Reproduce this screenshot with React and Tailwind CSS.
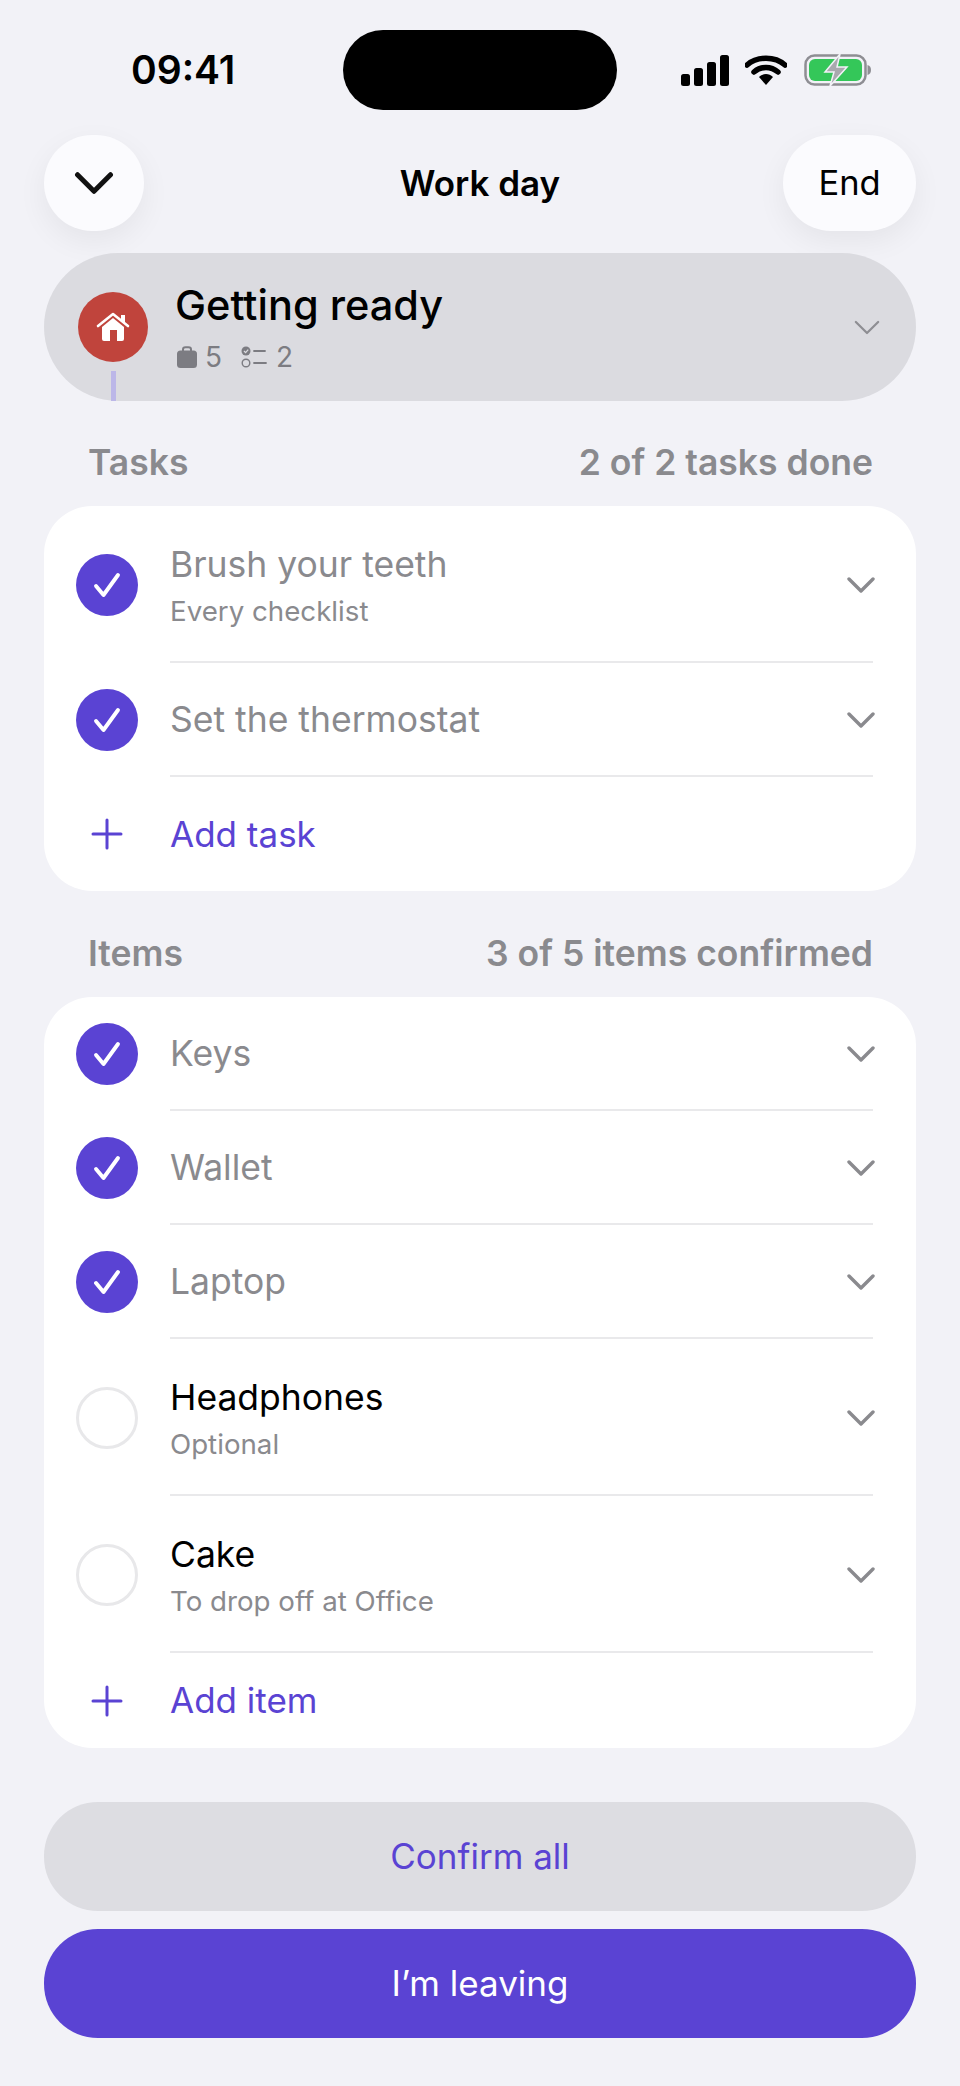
const tasks = [
  { title: 'Brush your teeth', sub: 'Every checklist', done: true },
  { title: 'Set the thermostat', done: true },
]

const items = [
  { title: 'Keys', done: true },
  { title: 'Wallet', done: true },
  { title: 'Laptop', done: true },
  { title: 'Headphones', sub: 'Optional' },
  { title: 'Cake', sub: 'To drop off at Office' },
]

function Chevron({ className, width = 28, height = 16, strokeWidth = 3.4 }) {
  return (
    <svg width={width} height={height} viewBox="0 0 28 16" fill="none" className={className}>
      <path d="M2 2 L14 14 L26 2" stroke="currentColor" strokeWidth={strokeWidth} strokeLinecap="round" strokeLinejoin="round" />
    </svg>
  )
}

function StatusIcons() {
  return (
    <div className="flex items-center gap-[16px] ml-[64px]">
      <svg width="48" height="31" viewBox="0 0 48 31" fill="#000">
        <rect x="0" y="19" width="9" height="12" rx="2.5" />
        <rect x="13" y="13" width="9" height="18" rx="2.5" />
        <rect x="26" y="7" width="9" height="24" rx="2.5" />
        <rect x="39" y="0" width="9" height="31" rx="2.5" />
      </svg>
      <svg width="42" height="31" viewBox="0 0 42 31" fill="none">
        <path d="M2 10 C12 1 30 1 40 10" stroke="#000" strokeWidth="5.5" strokeLinecap="round" />
        <path d="M9 17 C16 11 26 11 33 17" stroke="#000" strokeWidth="5.5" strokeLinecap="round" />
        <path d="M14 22 C18 18 24 18 28 22 L21 30 Z" fill="#000" />
      </svg>
      <svg width="68" height="32" viewBox="0 0 68 32" fill="none" className="ml-[1px]">
        <rect x="1.5" y="1.5" width="60" height="29" rx="9" stroke="#8e8e93" strokeWidth="2.5" />
        <rect x="5" y="5" width="53" height="22" rx="6" fill="#34c759" />
        <path d="M63.5 11 C66 11.5 67 13.5 67 16 C67 18.5 66 20.5 63.5 21 Z" fill="#8e8e93" />
        <path d="M36 0 L21 18 L30 18 L26 32 L43 13 L33 13 Z" fill="#a9a9ae" stroke="#f2f2f7" strokeWidth="1.5" />
      </svg>
    </div>
  )
}

function HouseIcon() {
  return (
    <svg width="34" height="30" viewBox="0 0 34 30" fill="none">
      <path d="M2 14 L17 2 L32 14" stroke="#fff" strokeWidth="2.6" strokeLinecap="round" strokeLinejoin="round" />
      <rect x="25" y="3" width="4" height="7" fill="#fff" />
      <path d="M6 15 L17 6 L28 15 L28 27 Q28 29 26 29 L8 29 Q6 29 6 27 Z" fill="#fff" />
      <rect x="14" y="18" width="7" height="11" fill="#c0443c" />
    </svg>
  )
}

function BagIcon() {
  return (
    <svg width="20" height="22" viewBox="0 0 20 22" fill="none">
      <path d="M6 5 V3.5 Q6 1.2 8.5 1.2 H11.5 Q14 1.2 14 3.5 V5" stroke="#7c7c82" strokeWidth="2" />
      <rect x="0" y="4.5" width="20" height="17.5" rx="3.5" fill="#7c7c82" />
    </svg>
  )
}

function ListIcon() {
  return (
    <svg width="26" height="22" viewBox="0 0 26 22" fill="none">
      <circle cx="5" cy="5" r="4.5" fill="#7c7c82" />
      <path d="M3 5 L4.6 6.6 L7.2 3.6" stroke="#dbdbe0" strokeWidth="1.3" />
      <circle cx="5" cy="17" r="3.8" stroke="#7c7c82" strokeWidth="1.4" />
      <path d="M13 5 H24 M13 17 H25" stroke="#7c7c82" strokeWidth="1.8" strokeLinecap="round" />
    </svg>
  )
}

function Check({ done }) {
  if (!done) {
    return <div className="w-[62px] h-[62px] rounded-full border-[3px] border-[#e8e8ea] bg-white shrink-0" />
  }
  return (
    <div className="w-[62px] h-[62px] rounded-full bg-[#5a43d3] flex items-center justify-center shrink-0">
      <svg width="28" height="26" viewBox="0 0 28 26" fill="none">
        <path d="M3 14 L10.5 23 L25 3" stroke="#fff" strokeWidth="3.9" strokeLinecap="round" strokeLinejoin="round" />
      </svg>
    </div>
  )
}

function Row({ title, sub, done }) {
  return (
    <div className={`flex items-center ${sub ? 'h-[157px]' : 'h-[114px]'}`}>
      <div className="w-[126px] pl-[32px] shrink-0">
        <Check done={done} />
      </div>
      <div className="flex-1 h-full flex items-center justify-between border-b-2 border-[#e9e9eb] mr-[43px]">
        <div className={sub ? 'pt-[5px]' : 'pt-[2px]'}>
          <div className={`text-[35.5px] leading-[44px] ${done ? 'text-[#8a8a8e]' : 'text-black'}`}>{title}</div>
          {sub && <div className="text-[27.7px] leading-[36px] mt-[6px] text-[#8a8a8e]">{sub}</div>}
        </div>
        <Chevron className="text-[#8a8a8e] mt-[2px] -mr-[2px]" />
      </div>
    </div>
  )
}

function AddRow({ label, height }) {
  return (
    <div className={`flex items-center ${height}`}>
      <div className="w-[126px] shrink-0 pl-[47px]">
        <svg width="32" height="32" viewBox="0 0 32 32" fill="none">
          <path d="M16 2 V30 M2 16 H30" stroke="#5a43d3" strokeWidth="3" strokeLinecap="round" />
        </svg>
      </div>
      <span className="text-[35px] text-[#5a43d3]">{label}</span>
    </div>
  )
}

function Section({ label, summary, children }) {
  return (
    <div>
      <div className="flex items-center justify-between h-[44px] pl-[44px] pr-[43px] text-[35.5px] font-semibold text-[#8a8a8e]">
        <span>{label}</span>
        <span>{summary}</span>
      </div>
      <div className="mt-[21px] bg-white rounded-[48px] overflow-hidden">{children}</div>
    </div>
  )
}

export default function App() {
  return (
    <div
      className="w-[960px] h-[2086px] bg-[#f2f2f7] overflow-hidden px-[44px]"
      style={{ fontFamily: 'Inter, sans-serif' }}
    >
      <div className="flex items-center h-[80px] mt-[30px] -mx-[44px] pl-[131px]">
        <span className="w-[212px] text-[39px] font-semibold text-black">09:41</span>
        <div className="w-[274px] h-[80px] rounded-full bg-black" />
        <StatusIcons />
      </div>

      <div className="flex items-center h-[96px] mt-[25px]">
        <div className="flex-1 flex">
          <div className="w-[100px] h-[96px] rounded-full bg-[#fbfbfe] flex items-center justify-center shadow-[0_10px_30px_rgba(0,0,0,0.06)]">
            <Chevron width={40} height={22} strokeWidth={3.6} className="text-[#111]" />
          </div>
        </div>
        <span className="text-[35px] font-semibold text-black">Work day</span>
        <div className="flex-1 flex justify-end">
          <div className="w-[133px] h-[96px] rounded-full bg-[#fbfbfe] flex items-center justify-center text-[34.5px] text-black shadow-[0_10px_30px_rgba(0,0,0,0.06)]">
            End
          </div>
        </div>
      </div>

      <div className="relative flex items-center h-[148px] mt-[22px] rounded-[74px] bg-[#dbdbe0] pl-[34px] pr-[36px]">
        <div className="w-[70px] h-[70px] rounded-full bg-[#c0443c] flex items-center justify-center shrink-0">
          <HouseIcon />
        </div>
        <div className="absolute left-[67px] bottom-0 w-[5px] h-[30px] bg-[#bcb7e8]" />
        <div className="ml-[27px] flex-1">
          <div className="text-[41.5px] leading-[50px] font-medium text-black">Getting ready</div>
          <div className="flex items-center text-[28px] leading-[36px] mt-[9px] text-[#7c7c82]">
            <span className="ml-[2px] flex"><BagIcon /></span>
            <span className="ml-[8px]">5</span>
            <span className="ml-[19px] flex"><ListIcon /></span>
            <span className="ml-[9px]">2</span>
          </div>
        </div>
        <Chevron width={26} height={15} className="text-[#8e8e93]" strokeWidth={2.4} />
      </div>

      <div className="mt-[40px]">
        <Section label="Tasks" summary="2 of 2 tasks done">
          {tasks.map((t) => (
            <Row key={t.title} {...t} />
          ))}
          <AddRow label="Add task" height="h-[114px]" />
        </Section>
      </div>

      <div className="mt-[41px]">
        <Section label="Items" summary="3 of 5 items confirmed">
          {items.map((t) => (
            <Row key={t.title} {...t} />
          ))}
          <AddRow label="Add item" height="h-[95px]" />
        </Section>
      </div>

      <div className="mt-[54px] flex flex-col gap-[18px]">
        <div className="h-[109px] rounded-[54px] bg-[#dddde2] flex items-center justify-center text-[35px] text-[#5a43d3]">
          Confirm all
        </div>
        <div className="h-[109px] rounded-[54px] bg-[#5a43d3] flex items-center justify-center text-[35px] text-white">
          I’m leaving
        </div>
      </div>
    </div>
  )
}
